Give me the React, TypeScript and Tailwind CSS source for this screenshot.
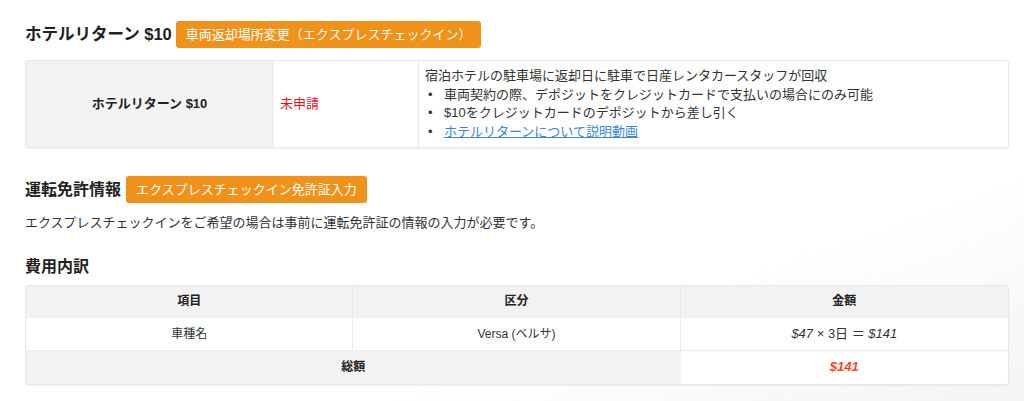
const font = "font-['Liberation_Sans','Noto_Sans_CJK_JP',sans-serif]";

const OrangeButton = ({ label }: { label: string }) => (
  <button className="rounded-[3px] bg-[#f0921a] px-[10px] h-[27px] text-[13px] text-white leading-none">
    {label}
  </button>
);

const App = () => {
  return (
    <div className={`${font} min-h-[401px] w-[1024px] bg-[linear-gradient(160deg,#ffffff_70%,#f4f4f4_100%)] pl-[25px] pr-[15px] pt-[21px] text-[#333]`}>
      <div className="flex items-center gap-[4px]">
        <h2 className="text-[16.5px] font-bold text-[#222] leading-none">ホテルリターン $10</h2>
        <OrangeButton label="車両返却場所変更（エクスプレスチェックイン）" />
      </div>

      <div className="mt-[12px] flex h-[88px] overflow-hidden rounded-[3px] border border-[#e8e8e8] shadow-[0_1px_2px_rgba(0,0,0,0.06)]">
        <div className="flex w-[247px] items-center justify-center bg-[#f2f2f2] text-[13px] font-bold text-[#222]">
          ホテルリターン $10
        </div>
        <div className="flex w-[146px] items-center border-x border-[#ececec] bg-white pl-[6px] text-[13px] text-[#e8141b]">
          未申請
        </div>
        <div className="flex-1 bg-white pl-[6px] pt-[6px] text-[13px] leading-[18.5px] text-[#333]">
          <p>宿泊ホテルの駐車場に返却日に駐車で日産レンタカースタッフが回収</p>
          <ul>
            <li className="flex"><span className="w-[19px] pl-[3px]">•</span>車両契約の際、デポジットをクレジットカードで支払いの場合にのみ可能</li>
            <li className="flex"><span className="w-[19px] pl-[3px]">•</span>$10をクレジットカードのデポジットから差し引く</li>
            <li className="flex"><span className="w-[19px] pl-[3px]">•</span><a className="text-[#3b86d8] underline">ホテルリターンについて説明動画</a></li>
          </ul>
        </div>
      </div>

      <div className="mt-[28px] flex items-center gap-[5px]">
        <h2 className="text-[16px] font-bold text-[#222] leading-none">運転免許情報</h2>
        <OrangeButton label="エクスプレスチェックイン免許証入力" />
      </div>
      <p className="mt-[10px] text-[13px] text-[#333]">
        エクスプレスチェックインをご希望の場合は事前に運転免許証の情報の入力が必要です。
      </p>

      <h2 className="mt-[26px] text-[16px] font-bold text-[#222] leading-none">費用内訳</h2>

      <div className="mt-[10px] overflow-hidden rounded-[3px] border border-[#e8e8e8] text-[12px] shadow-[0_1px_2px_rgba(0,0,0,0.06)]">
        <div className="grid h-[31px] grid-cols-3 bg-[#f2f2f2] font-bold text-[#222]">
          <div className="flex items-center justify-center border-r border-[#e6e6e6]">項目</div>
          <div className="flex items-center justify-center border-r border-[#e6e6e6]">区分</div>
          <div className="flex items-center justify-center">金額</div>
        </div>
        <div className="grid h-[34px] grid-cols-3 border-y border-[#ececec] bg-white text-[#333]">
          <div className="flex items-center justify-center border-r border-[#ececec]">車種名</div>
          <div className="flex items-center justify-center border-r border-[#ececec]">Versa (ベルサ)</div>
          <div className="flex items-center justify-center text-[13px]">
            <i>$47</i>&nbsp;× 3日 ＝&nbsp;<i>$141</i>
          </div>
        </div>
        <div className="grid h-[33px] grid-cols-3">
          <div className="col-span-2 flex items-center justify-center bg-[#f2f2f2] font-bold text-[#222]">総額</div>
          <div className="flex items-center justify-center bg-white text-[13px] font-bold italic text-[#f04a23]">$141</div>
        </div>
      </div>
    </div>
  );
};

export default App;
